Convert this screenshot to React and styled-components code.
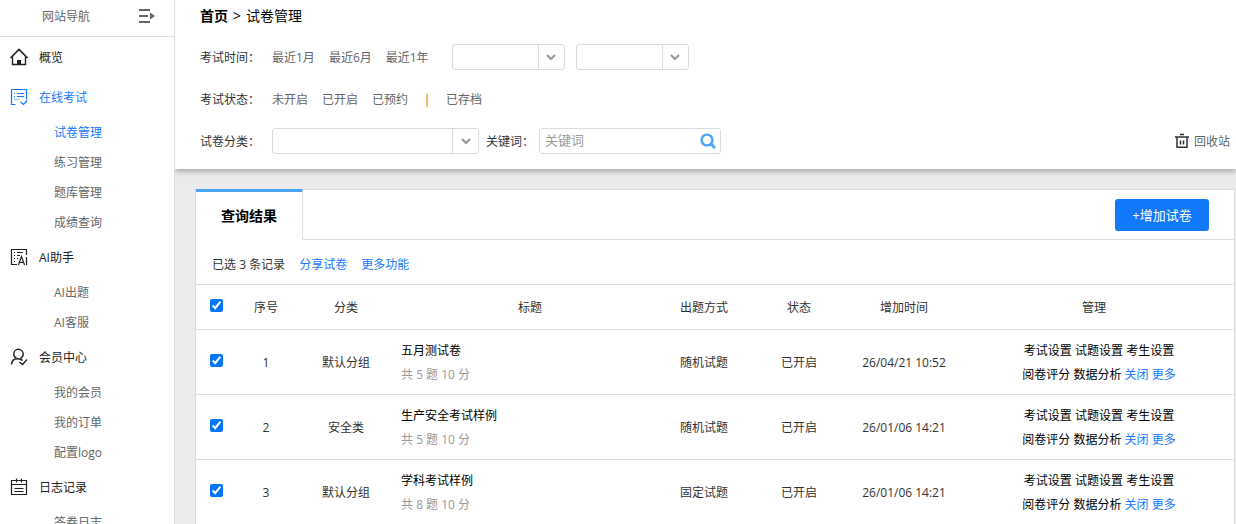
import { useState } from "react";
import styled, { createGlobalStyle } from "styled-components";

const GlobalStyle = createGlobalStyle`
  * {
    box-sizing: border-box;
  }
  body {
    margin: 0;
    background: #ebebeb;
    color: #333;
    font-family: "Open Sans", "Noto Sans CJK SC", sans-serif;
    font-size: 12px;
    line-height: 24px;
  }
  button, input, select {
    font-family: inherit;
  }
`;

const Layout = styled.div`
  display: flex;
  height: 100vh;
  overflow: hidden;
`;

const Sidebar = styled.nav`
  flex: 0 0 175px;
  z-index: 1;
  background: #fff;
  border-right: 1px solid #dedede;
`;

const SidebarHead = styled.div`
  display: flex;
  align-items: center;
  justify-content: space-between;
  height: 37px;
  padding: 0 18px 2px 42px;
  color: #666;
  border-bottom: 1px solid #dedede;
`;

const CollapseButton = styled.button`
  display: flex;
  padding: 0 0 2px;
  border: 0;
  background: none;
  color: #666;
  cursor: pointer;
`;

const MenuLink = styled.a`
  display: flex;
  align-items: center;
  gap: 10px;
  height: 40px;
  padding: 2px 0 0 9px;
  color: ${(props) => (props.$active ? "#1677ff" : "#222")};
  text-decoration: none;

  svg {
    margin-bottom: 2px;
  }
`;

const SubLink = styled.a`
  display: block;
  height: 30px;
  padding-left: 54px;
  line-height: 32px;
  color: ${(props) => (props.$active ? "#1677ff" : "#666")};
  text-decoration: none;
`;

const Main = styled.main`
  flex: 1;
  min-width: 0;
`;

const Filters = styled.section`
  padding: 0 6px 7px 25px;
  background: #fff;
  box-shadow: 0 2px 6px rgba(0, 0, 0, 0.32);
`;

const Breadcrumb = styled.div`
  display: flex;
  gap: 5px;
  height: 36px;
  font-size: 14px;
  line-height: 32px;
  color: #000;

  a {
    color: #000;
    font-weight: bold;
    text-decoration: none;
  }
`;

const FilterRow = styled.div`
  display: flex;
  align-items: center;
  height: 42px;
`;

const FilterLabel = styled.label`
  width: ${(props) => (props.$narrow ? "53px" : "72px")};
  padding-top: 2px;
`;

const Options = styled.div`
  display: flex;
  gap: 14px;
  margin-right: 23px;
  padding-top: 2px;
`;

const Option = styled.a`
  color: #666;
  text-decoration: none;
`;

const Divider = styled.span`
  width: 10px;
  text-align: center;
  color: #a66a2c;
`;

const SelectBox = styled.div`
  position: relative;
  width: ${(props) => props.$width};
  height: 26px;
  margin-right: ${(props) => props.$gap};

  select {
    width: 100%;
    height: 26px;
    padding: 0 30px 0 6px;
    border: 1px solid #dcdcdc;
    border-radius: 3px;
    background: #fff;
    appearance: none;
  }
`;

const SelectArrow = styled.span`
  position: absolute;
  top: 1px;
  right: 1px;
  bottom: 1px;
  display: flex;
  align-items: center;
  justify-content: center;
  width: 26px;
  border-left: 1px solid #dcdcdc;
  pointer-events: none;
`;

const SearchBox = styled.div`
  display: flex;
  align-items: center;
  width: 182px;
  height: 26px;
  padding: 0 4px 0 5px;
  border: 1px solid #dcdcdc;
  border-radius: 3px;

  input {
    flex: 1;
    min-width: 0;
    height: 24px;
    padding: 0 0 2px;
    border: 0;
    outline: 0;
    background: none;
    font-size: 13px;
  }
  input::placeholder {
    color: #999;
  }
  button {
    display: flex;
    padding: 0;
    border: 0;
    background: none;
    cursor: pointer;
  }
`;

const RecycleLink = styled.a`
  display: flex;
  align-items: center;
  gap: 4px;
  margin-left: auto;
  padding-top: 2px;
  color: #666;
  text-decoration: none;

  svg {
    margin-bottom: 2px;
  }
`;

const Content = styled.section`
  padding: 20px 1px 0 20px;
`;

const Card = styled.div`
  background: #fff;
  border: 1px solid #dedede;
`;

const CardHead = styled.div`
  display: flex;
  align-items: stretch;
  height: 50px;
`;

const Tab = styled.h2`
  width: 107px;
  margin: -1px 0 0;
  border-top: 3px solid #4ca3fd;
  border-right: 1px solid #dedede;
  font-size: 14px;
  line-height: 48px;
  text-align: center;
  color: #000;
`;

const HeadRest = styled.div`
  display: flex;
  flex: 1;
  align-items: center;
  justify-content: flex-end;
  padding-right: 25px;
  border-bottom: 1px solid #dedede;
`;

const AddButton = styled.button`
  width: 94px;
  height: 32px;
  padding: 0;
  border: 0;
  border-radius: 3px;
  background: #1279fa;
  color: #fff;
  font-size: 13px;
  cursor: pointer;
`;

const Toolbar = styled.div`
  display: flex;
  align-items: center;
  gap: 14px;
  height: 44px;
  padding: 6px 16px 0;
`;

const BlueLink = styled.a`
  color: #1677ff;
  text-decoration: none;
`;

const Table = styled.table`
  width: 100%;
  table-layout: fixed;
  border-collapse: separate;
  border-spacing: 0;
`;

const Cell = styled.td`
  height: 65px;
  padding: 2px 0 0;
  border-top: 1px solid #dedede;
  text-align: center;
`;

const HeadCell = styled(Cell)`
  width: ${(props) => props.$width || "auto"};
  height: 45px;
  font-weight: normal;
`;

const TitleCell = styled(Cell)`
  padding-left: 5px;
  text-align: left;

  a {
    color: #000;
    text-decoration: none;
  }
  p {
    margin: 0;
    color: #999;
  }
`;

const ManageCell = styled(Cell)`
  padding-left: 10px;

  a {
    color: #000;
    text-decoration: none;
  }
  ${BlueLink} {
    color: #1677ff;
  }
`;

const Check = styled.input`
  display: block;
  width: 13px;
  height: 13px;
  margin: 0 auto 5px;
`;

const icons = {
  home: (
    <>
      <path d="M1.500 11 10 2.500l8.500 8.500" strokeWidth="1.600" />
      <path d="M3.500 9.500v8h13v-8" strokeWidth="1.400" />
      <path d="M8 13h4v4H8z" fill="currentColor" stroke="none" />
    </>
  ),
  exam: (
    <>
      <path d="M6.500 17.500h-4v-15h15v10" />
      <path d="M5 6.500h1M8 6.500h7M5 9.500h1M8 9.500h7" />
      <path d="M5 12.500h6" strokeOpacity="0.4" />
      <path d="M11.500 15l3 2.500 3.500-4" />
    </>
  ),
  ai: (
    <>
      <path d="M8 17.500H2.500v-15h15V8" />
      <path d="M5 5.500h1M8 5.500h6M5 8.500h1M8 8.500h3M5 11.500h1M8 11.500h1M5 14.500h1" />
      <path d="M9.500 18 12.500 9.500l3 8.500M10.500 15.500h4M17.500 10v8" />
    </>
  ),
  member: (
    <>
      <path d="M7.500 11.500C5.500 10.500 4.800 9 4.800 7a4.700 4.700 0 0 1 9.400 0c0 2-.7 3.500-2.700 4.500" strokeWidth="1.400" />
      <path d="M2.500 17.500c.3-3.500 2.500-5.800 6-5.800 2.500 0 4 .5 5 1.800" strokeWidth="1.400" />
      <path d="M10.500 15l3 2.500 4.500-5" strokeWidth="1.400" />
    </>
  ),
  log: (
    <>
      <path d="M2.500 3.500h15v14h-15zM2.500 7.500h15M7.500 1.500v4M12.500 1.500v4" />
      <path d="M5.500 11.500h9M5.500 14.500h9" />
    </>
  ),
};

const MenuIcon = ({ name }) => (
  <svg width="20" height="20" viewBox="0 0 20 20" fill="none" stroke="currentColor" strokeWidth="1.2">
    {icons[name]}
  </svg>
);

const menu = [
  { name: "概览", icon: "home", items: [] },
  { name: "在线考试", icon: "exam", active: true, items: ["试卷管理", "练习管理", "题库管理", "成绩查询"] },
  { name: "AI助手", icon: "ai", items: ["AI出题", "AI客服"] },
  { name: "会员中心", icon: "member", items: ["我的会员", "我的订单", "配置logo"] },
  { name: "日志记录", icon: "log", items: ["答卷日志"] },
];

const papers = [
  { id: 1, group: "默认分组", title: "五月测试卷", total: 5, score: 10, mode: "随机试题", time: "26/04/21 10:52" },
  { id: 2, group: "安全类", title: "生产安全考试样例", total: 5, score: 10, mode: "随机试题", time: "26/01/06 14:21" },
  { id: 3, group: "默认分组", title: "学科考试样例", total: 8, score: 10, mode: "固定试题", time: "26/01/06 14:21" },
];

const Select = ({ id, label, width, gap }) => (
  <SelectBox $width={width} $gap={gap}>
    <select id={id} aria-label={label}>
      <option></option>
    </select>
    <SelectArrow>
      <svg width="10" height="8" viewBox="0 0 10 8" fill="none" stroke="#999" strokeWidth="2.200">
        <path d="M1 2l4 4 4-4" />
      </svg>
    </SelectArrow>
  </SelectBox>
);

const App = () => {
  const [selected, setSelected] = useState([1, 2, 3]);

  const toggle = (id) => {
    setSelected(selected.includes(id) ? selected.filter((x) => x !== id) : [...selected, id]);
  };

  const toggleAll = () => {
    setSelected(selected.length === papers.length ? [] : papers.map((p) => p.id));
  };

  return (
    <Layout>
      <GlobalStyle />
      <Sidebar>
        <SidebarHead>
          网站导航
          <CollapseButton aria-label="收起导航">
            <svg width="18" height="16" viewBox="0 0 18 16">
              <path d="M1 2h11M1 8h9M1 14h11" stroke="currentColor" strokeWidth="2" />
              <path d="M12 4.500v7L17 8z" fill="currentColor" />
            </svg>
          </CollapseButton>
        </SidebarHead>
        {menu.map((group) => (
          <div key={group.name}>
            <MenuLink href="#" $active={group.active}>
              <MenuIcon name={group.icon} />
              {group.name}
            </MenuLink>
            {group.items.map((item) => (
              <SubLink href="#" key={item} $active={item === "试卷管理"}>{item}</SubLink>
            ))}
          </div>
        ))}
      </Sidebar>

      <Main>
        <Filters>
          <Breadcrumb>
            <a href="#">首页</a>
            <span>&gt;</span>
            <span>试卷管理</span>
          </Breadcrumb>
          <FilterRow>
            <FilterLabel htmlFor="start">考试时间：</FilterLabel>
            <Options>
              <Option href="#">最近1月</Option>
              <Option href="#">最近6月</Option>
              <Option href="#">最近1年</Option>
            </Options>
            <Select id="start" width="113px" gap="11px" />
            <Select id="end" label="结束时间" width="113px" gap="0" />
          </FilterRow>
          <FilterRow>
            <FilterLabel as="span">考试状态：</FilterLabel>
            <Options>
              <Option href="#">未开启</Option>
              <Option href="#">已开启</Option>
              <Option href="#">已预约</Option>
              <Divider>|</Divider>
              <Option href="#">已存档</Option>
            </Options>
          </FilterRow>
          <FilterRow>
            <FilterLabel htmlFor="category">试卷分类：</FilterLabel>
            <Select id="category" width="207px" gap="7px" />
            <FilterLabel htmlFor="keyword" $narrow>关键词：</FilterLabel>
            <SearchBox>
              <input id="keyword" type="text" placeholder="关键词" />
              <button aria-label="搜索">
                <svg width="16" height="16" viewBox="0 0 16 16" fill="none" stroke="#4ca3fd" strokeWidth="2.400">
                  <circle cx="7" cy="7" r="5.400" />
                  <path d="M11 11l4 4" strokeWidth="2.800" />
                </svg>
              </button>
            </SearchBox>
            <RecycleLink href="#">
              <svg width="16" height="16" viewBox="0 0 16 16" fill="none" stroke="#333" strokeWidth="1.500">
                <path d="M6 1.500h4M1 4h14M3 4v10.200h10V4M6.500 7.500v4M9.500 7.500v4" />
              </svg>
              回收站
            </RecycleLink>
          </FilterRow>
        </Filters>

        <Content>
          <Card>
            <CardHead>
              <Tab>查询结果</Tab>
              <HeadRest>
                <AddButton>+增加试卷</AddButton>
              </HeadRest>
            </CardHead>
            <Toolbar>
              <span>已选 {selected.length} 条记录</span>
              <BlueLink href="#">分享试卷</BlueLink>
              <BlueLink href="#">更多功能</BlueLink>
            </Toolbar>
            <Table>
              <thead>
                <tr>
                  <HeadCell as="th" $width="40px">
                    <Check
                      type="checkbox"
                      aria-label="全选"
                      checked={selected.length === papers.length}
                      onChange={toggleAll}
                    />
                  </HeadCell>
                  <HeadCell as="th" $width="60px">序号</HeadCell>
                  <HeadCell as="th" $width="100px">分类</HeadCell>
                  <HeadCell as="th">标题</HeadCell>
                  <HeadCell as="th" $width="80px">出题方式</HeadCell>
                  <HeadCell as="th" $width="110px">状态</HeadCell>
                  <HeadCell as="th" $width="100px">增加时间</HeadCell>
                  <HeadCell as="th" $width="280px">管理</HeadCell>
                </tr>
              </thead>
              <tbody>
                {papers.map(({ id, group, title, total, score, mode, time }) => (
                  <tr key={id}>
                    <Cell>
                      <Check
                        type="checkbox"
                        aria-label={title}
                        checked={selected.includes(id)}
                        onChange={() => toggle(id)}
                      />
                    </Cell>
                    <Cell>{id}</Cell>
                    <Cell>{group}</Cell>
                    <TitleCell>
                      <a href="#">{title}</a>
                      <p>共 {total} 题 {score} 分</p>
                    </TitleCell>
                    <Cell>{mode}</Cell>
                    <Cell>已开启</Cell>
                    <Cell>{time}</Cell>
                    <ManageCell>
                      <a href="#">考试设置</a> <a href="#">试题设置</a> <a href="#">考生设置</a>
                      <br />
                      <a href="#">阅卷评分</a> <a href="#">数据分析</a>{" "}
                      <BlueLink href="#">关闭</BlueLink> <BlueLink href="#">更多</BlueLink>
                    </ManageCell>
                  </tr>
                ))}
              </tbody>
            </Table>
          </Card>
        </Content>
      </Main>
    </Layout>
  );
};

export default App;
